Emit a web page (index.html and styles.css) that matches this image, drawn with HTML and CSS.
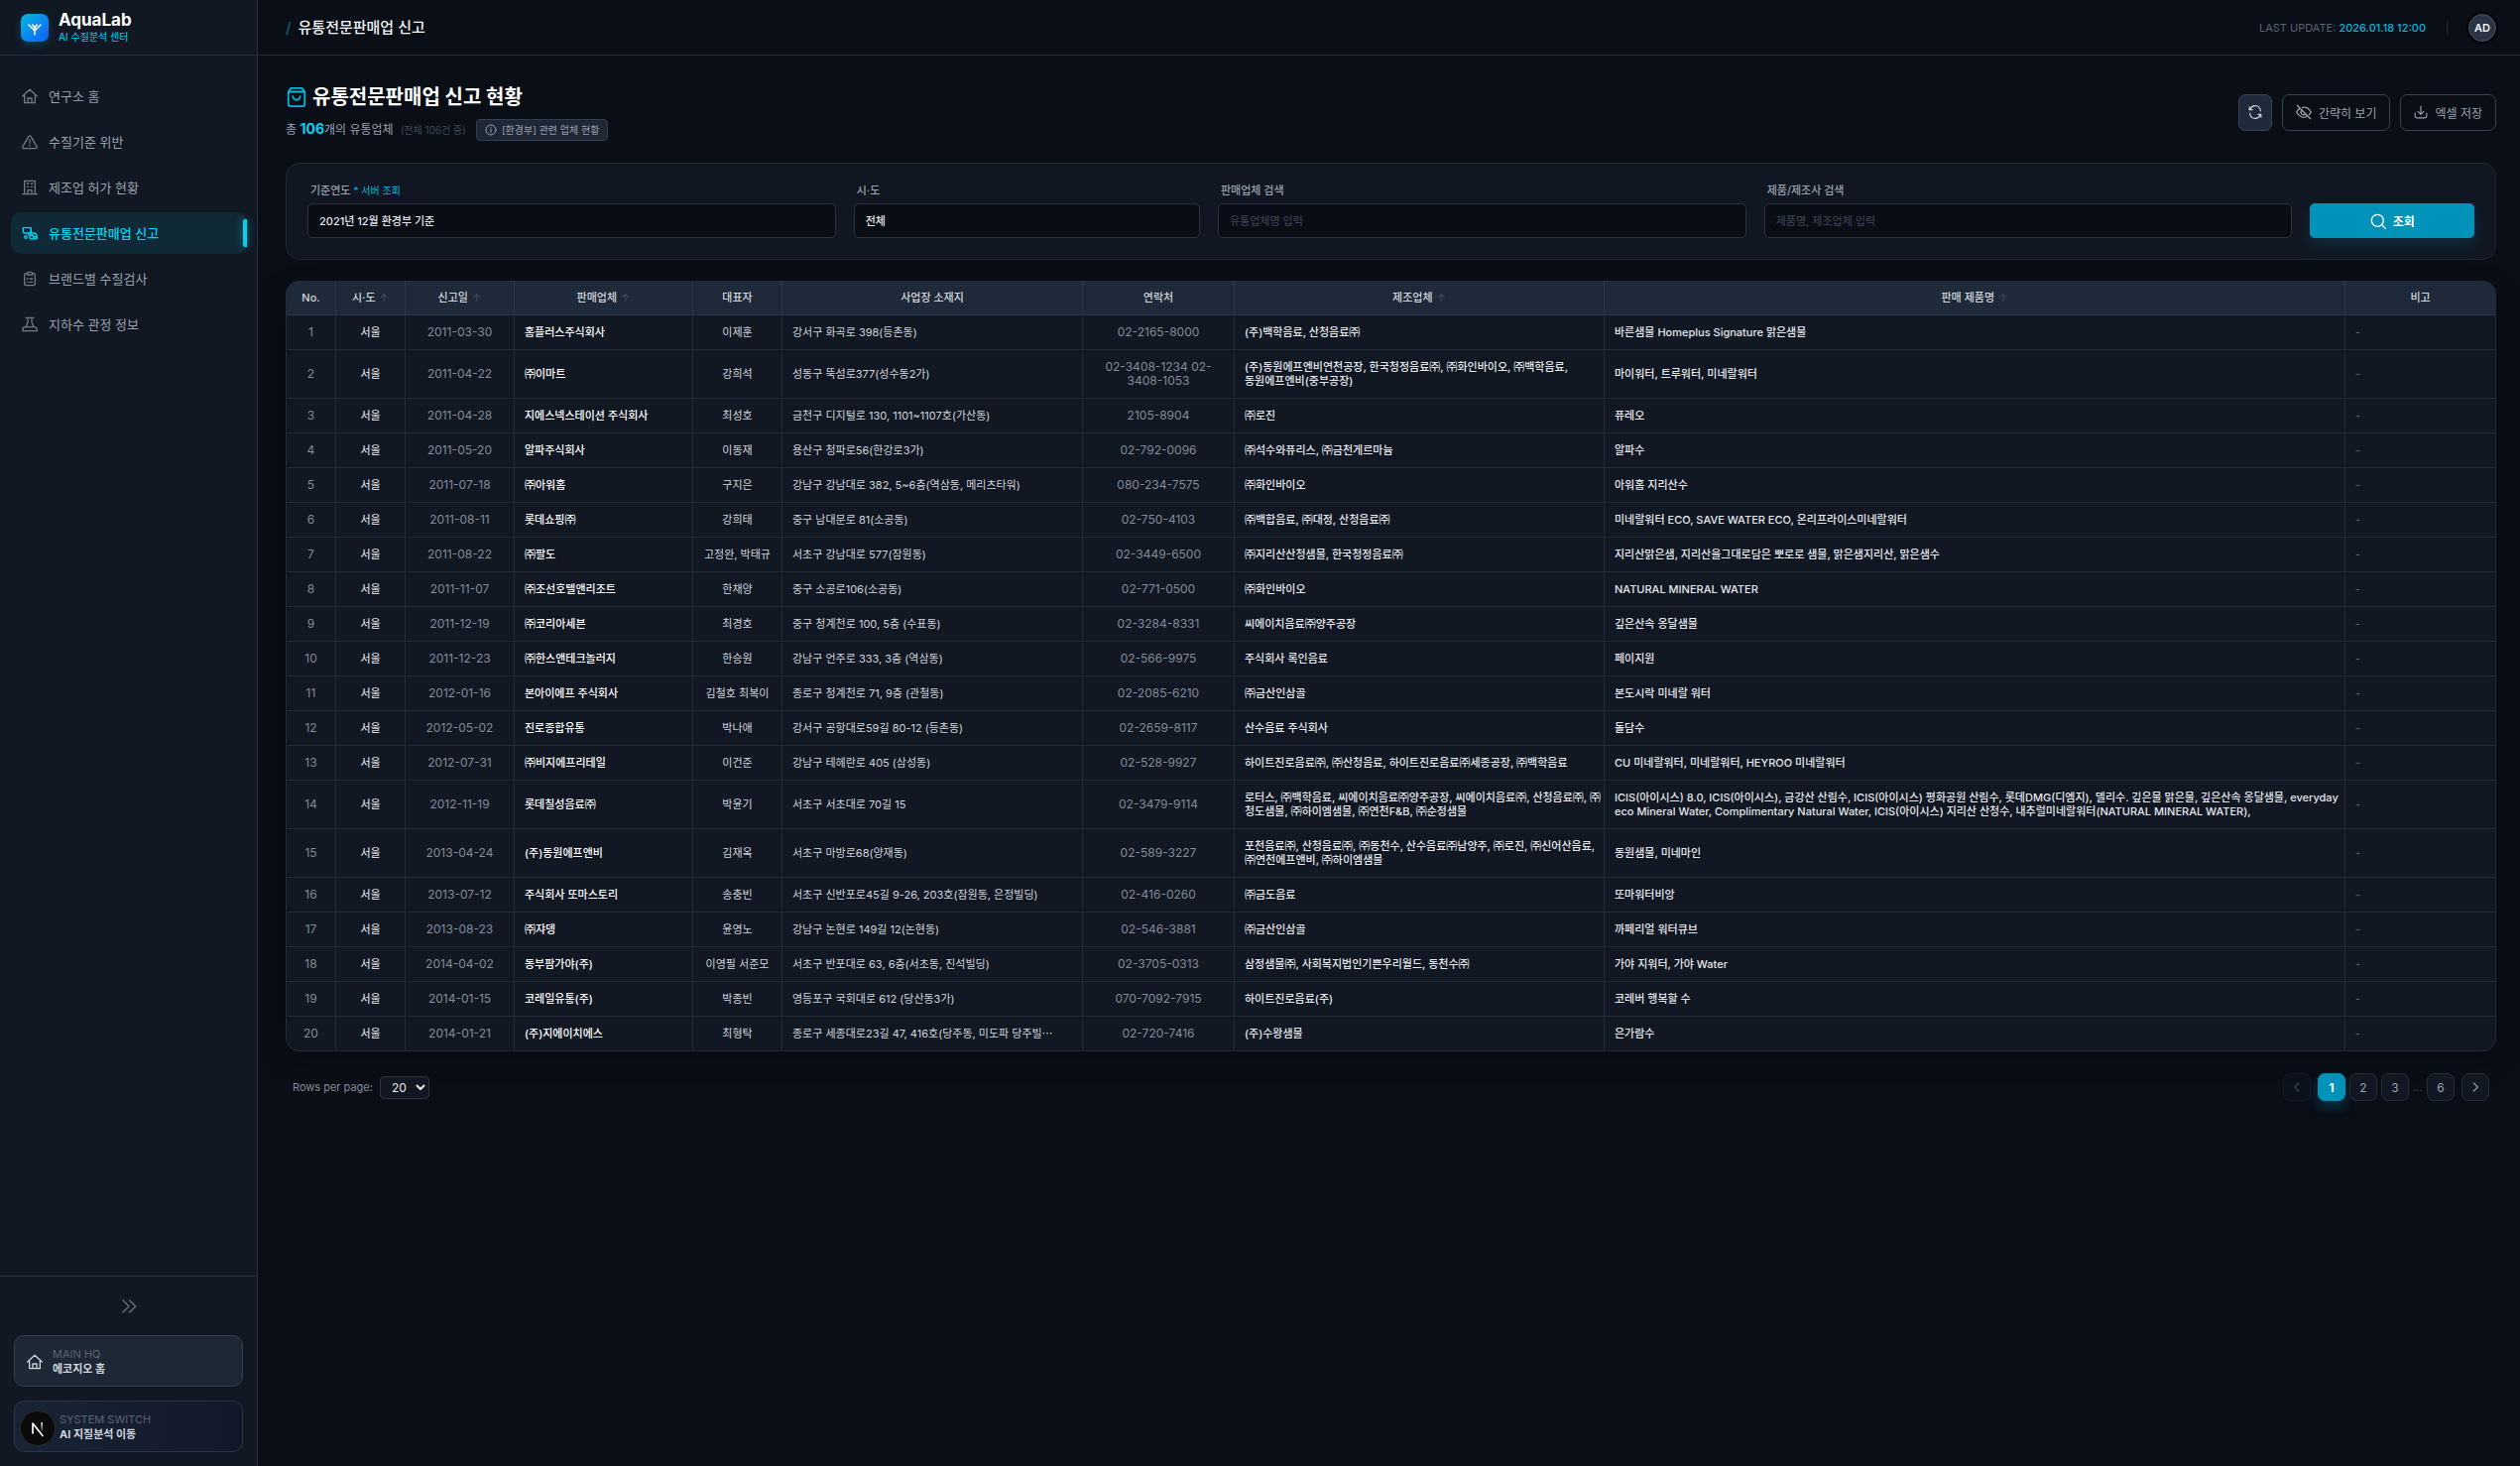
FILE: index.html
```html
<!DOCTYPE html>
<html lang="ko">
<head>
  <meta charset="UTF-8">
  <meta name="viewport" content="width=device-width, initial-scale=1.0">
  <title>AquaLab - 유통전문판매업 신고</title>
  <link rel="stylesheet" href="styles.css">
</head>
<body>
  <aside class="sidebar">
    <div class="brand">
      <span class="brand-logo">
        <svg viewBox="0 0 24 24" width="18" height="18"><path d="M12 21V11M12 16 4 8M12 16l8-8M12 12l-3-4M12 12l3-4"/></svg>
      </span>
      <div>
        <strong class="brand-name">AquaLab</strong>
        <span class="brand-sub">AI 수질분석 센터</span>
      </div>
    </div>

    <nav class="menu">
      <a href="#"><svg viewBox="0 0 24 24"><path d="M1 12 12 2l11 10M4 10v12h16V10M9 22v-7h6v7"/></svg>연구소 홈</a>
      <a href="#"><svg viewBox="0 0 24 24"><path d="M10.5 3.5 1.5 19A2 2 0 0 0 3 22h18a2 2 0 0 0 1.5-3l-9-15.5a2 2 0 0 0-3 0zM12 9v5M12 17v1"/></svg>수질기준 위반</a>
      <a href="#"><svg viewBox="0 0 24 24"><path d="M1 22h22M4 22V2h16v20M9 22v-6h6v6M8 6h2M14 6h2M8 11h2M14 11h2"/></svg>제조업 허가 현황</a>
      <a href="#" class="active"><svg viewBox="0 0 24 24"><path d="M2 4h12v8H5a3 3 0 0 1-3-3zM14 5l-1 7 4 4M16 12h4l3 4v4M9 13l4 3"/><circle cx="6" cy="18" r="2"/><circle cx="15" cy="18" r="3"/><circle cx="20" cy="19" r="2"/></svg>유통전문판매업 신고</a>
      <a href="#"><svg viewBox="0 0 24 24"><path d="M8 4H6a2 2 0 0 0-2 2v14a2 2 0 0 0 2 2h12a2 2 0 0 0 2-2V6a2 2 0 0 0-2-2h-2M8 6h8V4a2 2 0 0 0-2-2h-4a2 2 0 0 0-2 2zM8 12h1M12 12h4M8 17h1M12 17h4"/></svg>브랜드별 수질검사</a>
      <a href="#"><svg viewBox="0 0 24 24"><path d="M6 2h12M9 2v7l-3 7M15 2v7l3 7M5 16h14c3 0 4 2 4 5v1H1v-1c0-3 1-5 4-5z"/></svg>지하수 관정 정보</a>
    </nav>

    <div class="sidebar-foot">
      <button class="collapse" aria-label="메뉴 펼치기"><svg viewBox="0 0 24 24" width="16" height="16"><path d="m3 3 9 9-9 9M13 3l9 9-9 9"/></svg></button>
      <a href="#" class="switch">
        <svg viewBox="0 0 24 24" width="16" height="16"><path d="M1 12 12 2l11 10M4 10v12h16V10M9 22v-7h6v7"/></svg>
        <span><small>MAIN HQ</small><b>에코지오 홈</b></span>
      </a>
      <a href="#" class="switch system">
        <span><small>SYSTEM SWITCH</small><b>AI 지질분석 이동</b></span>
      </a>
    </div>
    <button class="dev-badge" aria-label="개발 도구">
      <svg viewBox="0 0 24 24" width="20" height="20">
        <defs><linearGradient id="fade" x1="0" y1="0" x2="0" y2="1"><stop offset="0" stop-color="#fff"/><stop offset="1" stop-color="#fff" stop-opacity="0"/></linearGradient></defs>
        <path d="M6 18V6l12 15"/><rect x="16" y="5" width="2" height="12" fill="url(#fade)" stroke="none"/>
      </svg>
    </button>
  </aside>

  <div class="page">
    <header class="topbar">
      <div class="crumb"><span>/</span>유통전문판매업 신고</div>
      <div class="topbar-right">
        <span class="updated">LAST UPDATE: <em>2026.01.18 12:00</em></span>
        <i class="divider"></i>
        <span class="avatar">AD</span>
      </div>
    </header>

    <main>
      <section class="heading">
        <div>
          <h1><svg viewBox="0 0 24 24" width="22" height="22"><path d="M6 2h12l3 4v14a2 2 0 0 1-2 2H5a2 2 0 0 1-2-2V6zM3 6h18M8 11a4 4 0 0 0 8 0"/></svg>유통전문판매업 신고 현황</h1>
          <p class="summary">
            <span>총 <b>106</b>개의 유통업체</span>
            <span class="total">(전체 106건 중)</span>
            <span class="chip"><svg viewBox="0 0 24 24" width="12" height="12"><circle cx="12" cy="12" r="10"/><path d="M12 11v6M12 7v1"/></svg>[환경부] 관련 업체 현황</span>
          </p>
        </div>
        <div class="actions">
          <button class="btn icon-btn" aria-label="새로고침"><svg viewBox="0 0 24 24" width="14" height="14"><path d="M21 10A9 9 0 0 0 4 6L2 8M2 3v5h5M3 14a9 9 0 0 0 17 4l2-2M22 21v-5h-5"/></svg></button>
          <button class="btn"><svg viewBox="0 0 24 24" width="16" height="16"><path d="M2 2l20 20M6 6C4 8 2 10 1 12c3 5 7 8 11 8 2 0 4-1 6-2M10 5c5-1 10 2 13 7a14 14 0 0 1-3 4M9 9a4 4 0 0 0 6 6"/></svg>간략히 보기</button>
          <button class="btn"><svg viewBox="0 0 24 24" width="14" height="14"><path d="M12 2v14M7 11l5 5 5-5M2 14v5a3 3 0 0 0 3 3h14a3 3 0 0 0 3-3v-5"/></svg>엑셀 저장</button>
        </div>
      </section>

      <form class="filters">
        <div class="field wide">
          <label for="year">기준연도 <span>* 서버 조회</span></label>
          <select id="year"><option>2021년 12월 환경부 기준</option></select>
        </div>
        <div class="field">
          <label for="region">시·도</label>
          <select id="region"><option>전체</option></select>
        </div>
        <div class="field wide">
          <label for="seller">판매업체 검색</label>
          <input id="seller" type="text" placeholder="유통업체명 입력">
        </div>
        <div class="field wide">
          <label for="product">제품/제조사 검색</label>
          <input id="product" type="text" placeholder="제품명, 제조업체 입력">
        </div>
        <button type="button" class="search"><svg viewBox="0 0 24 24" width="16" height="16"><circle cx="11" cy="11" r="9"/><path d="m18 18 5 5"/></svg>조회</button>
      </form>

      <div class="table-card">
        <table>
          <colgroup>
            <col class="c-no"><col class="c-region"><col class="c-date"><col class="c-seller"><col class="c-ceo">
            <col class="c-addr"><col class="c-tel"><col class="c-maker"><col><col class="c-note">
          </colgroup>
          <thead>
            <tr><th>No.</th><th>시·도<i>↑</i></th><th>신고일<i>↑</i></th><th>판매업체<i>↑</i></th><th>대표자</th><th>사업장 소재지</th><th>연락처</th><th>제조업체<i>↑</i></th><th>판매 제품명<i>↑</i></th><th>비고</th></tr>
          </thead>
          <tbody>
            <tr><td>1</td><td>서울</td><td>2011-03-30</td><td>홈플러스주식회사</td><td>이제훈</td><td>강서구 화곡로 398(등촌동)</td><td>02-2165-8000</td><td>(주)백학음료, 산청음료㈜</td><td>바른샘물 Homeplus Signature 맑은샘물</td><td>-</td></tr>
            <tr><td>2</td><td>서울</td><td>2011-04-22</td><td>㈜이마트</td><td>강희석</td><td>성동구 뚝섬로377(성수동2가)</td><td>02-3408-1234 02-<br>3408-1053</td><td>(주)동원에프엔비연천공장, 한국청정음료㈜, ㈜화인바이오, ㈜백학음료,<br>동원에프엔비(중부공장)</td><td>마이워터, 트루워터, 미네랄워터</td><td>-</td></tr>
            <tr><td>3</td><td>서울</td><td>2011-04-28</td><td>지에스넥스테이션 주식회사</td><td>최성호</td><td>금천구 디지털로 130, 1101~1107호(가산동)</td><td>2105-8904</td><td>㈜로진</td><td>퓨레오</td><td>-</td></tr>
            <tr><td>4</td><td>서울</td><td>2011-05-20</td><td>알파주식회사</td><td>이동재</td><td>용산구 청파로56(한강로3가)</td><td>02-792-0096</td><td>㈜석수와퓨리스, ㈜금천게르마늄</td><td>알파수</td><td>-</td></tr>
            <tr><td>5</td><td>서울</td><td>2011-07-18</td><td>㈜아워홈</td><td>구지은</td><td>강남구 강남대로 382, 5~6층(역삼동, 메리츠타워)</td><td>080-234-7575</td><td>㈜화인바이오</td><td>아워홈 지리산수</td><td>-</td></tr>
            <tr><td>6</td><td>서울</td><td>2011-08-11</td><td>롯데쇼핑㈜</td><td>강희태</td><td>중구 남대문로 81(소공동)</td><td>02-750-4103</td><td>㈜백합음료, ㈜대정, 산청음료㈜</td><td>미네랄워터 ECO, SAVE WATER ECO, 온리프라이스미네랄워터</td><td>-</td></tr>
            <tr><td>7</td><td>서울</td><td>2011-08-22</td><td>㈜팔도</td><td>고정완, 박태규</td><td>서초구 강남대로 577(잠원동)</td><td>02-3449-6500</td><td>㈜지리산산청샘물, 한국청정음료㈜</td><td>지리산맑은샘, 지리산을그대로담은 뽀로로 샘물, 맑은샘지리산, 맑은샘수</td><td>-</td></tr>
            <tr><td>8</td><td>서울</td><td>2011-11-07</td><td>㈜조선호텔앤리조트</td><td>한채양</td><td>중구 소공로106(소공동)</td><td>02-771-0500</td><td>㈜화인바이오</td><td>NATURAL MINERAL WATER</td><td>-</td></tr>
            <tr><td>9</td><td>서울</td><td>2011-12-19</td><td>㈜코리아세븐</td><td>최경호</td><td>중구 청계천로 100, 5층 (수표동)</td><td>02-3284-8331</td><td>씨에이치음료㈜양주공장</td><td>깊은산속 옹달샘물</td><td>-</td></tr>
            <tr><td>10</td><td>서울</td><td>2011-12-23</td><td>㈜한스앤테크놀러지</td><td>한승원</td><td>강남구 언주로 333, 3층 (역삼동)</td><td>02-566-9975</td><td>주식회사 록인음료</td><td>페이지원</td><td>-</td></tr>
            <tr><td>11</td><td>서울</td><td>2012-01-16</td><td>본아이에프 주식회사</td><td>김철호 최복이</td><td>종로구 청계천로 71, 9층 (관철동)</td><td>02-2085-6210</td><td>㈜금산인삼골</td><td>본도시락 미네랄 워터</td><td>-</td></tr>
            <tr><td>12</td><td>서울</td><td>2012-05-02</td><td>진로종합유통</td><td>박나애</td><td>강서구 공항대로59길 80-12 (등촌동)</td><td>02-2659-8117</td><td>산수음료 주식회사</td><td>돌담수</td><td>-</td></tr>
            <tr><td>13</td><td>서울</td><td>2012-07-31</td><td>㈜비지에프리테일</td><td>이건준</td><td>강남구 테헤란로 405 (삼성동)</td><td>02-528-9927</td><td>하이트진로음료㈜, ㈜산청음료, 하이트진로음료㈜세종공장, ㈜백학음료</td><td>CU 미네랄워터, 미네랄워터, HEYROO 미네랄워터</td><td>-</td></tr>
            <tr><td>14</td><td>서울</td><td>2012-11-19</td><td>롯데칠성음료㈜</td><td>박윤기</td><td>서초구 서초대로 70길 15</td><td>02-3479-9114</td><td>로터스, ㈜백학음료, 씨에이치음료㈜양주공장, 씨에이치음료㈜, 산청음료㈜, ㈜<br>청도샘물, ㈜하이엠샘물, ㈜연천F&amp;B, ㈜순정샘물</td><td>ICIS(아이시스) 8.0, ICIS(아이시스), 금강산 산림수, ICIS(아이시스) 평화공원 산림수, 롯데DMG(디엠지), 델리수. 깊은물 맑은물, 깊은산속 옹달샘물, everyday<br>eco Mineral Water, Complimentary Natural Water, ICIS(아이시스) 지리산 산청수, 내추럴미네랄워터(NATURAL MINERAL WATER),</td><td>-</td></tr>
            <tr><td>15</td><td>서울</td><td>2013-04-24</td><td>(주)동원에프앤비</td><td>김재옥</td><td>서초구 마방로68(양재동)</td><td>02-589-3227</td><td>포천음료㈜, 산청음료㈜, ㈜동천수, 산수음료㈜남양주, ㈜로진, ㈜신어산음료,<br>㈜연천에프앤비, ㈜하이엠샘물</td><td>동원샘물, 미네마인</td><td>-</td></tr>
            <tr><td>16</td><td>서울</td><td>2013-07-12</td><td>주식회사 또마스토리</td><td>송충빈</td><td>서초구 신반포로45길 9-26, 203호(잠원동, 은정빌딩)</td><td>02-416-0260</td><td>㈜금도음료</td><td>또마워터비앙</td><td>-</td></tr>
            <tr><td>17</td><td>서울</td><td>2013-08-23</td><td>㈜쟈뎅</td><td>윤영노</td><td>강남구 논현로 149길 12(논현동)</td><td>02-546-3881</td><td>㈜금산인삼골</td><td>까페리얼 워터큐브</td><td>-</td></tr>
            <tr><td>18</td><td>서울</td><td>2014-04-02</td><td>동부팜가야(주)</td><td>이영필 서준모</td><td>서초구 반포대로 63, 6층(서초동, 진석빌딩)</td><td>02-3705-0313</td><td>삼정샘물㈜, 사회복지법인기쁜우리월드, 동천수㈜</td><td>가야 지워터, 가야 Water</td><td>-</td></tr>
            <tr><td>19</td><td>서울</td><td>2014-01-15</td><td>코레일유통(주)</td><td>박종빈</td><td>영등포구 국회대로 612 (당산동3가)</td><td>070-7092-7915</td><td>하이트진로음료(주)</td><td>코레버 행복할 수</td><td>-</td></tr>
            <tr><td>20</td><td>서울</td><td>2014-01-21</td><td>(주)지에이치에스</td><td>최형탁</td><td>종로구 세종대로23길 47, 416호(당주동, 미도파 당주빌⋯</td><td>02-720-7416</td><td>(주)수왕샘물</td><td>은가람수</td><td>-</td></tr>
          </tbody>
        </table>
      </div>

      <footer class="pager">
        <label for="rows">Rows per page:</label>
        <select id="rows"><option>20</option></select>
        <div class="pages">
          <button disabled aria-label="이전"><svg viewBox="0 0 24 24" width="14" height="14"><path d="m15 5-7 7 7 7"/></svg></button>
          <div class="numbers">
            <button class="current">1</button>
            <button>2</button>
            <button>3</button>
            <span>...</span>
            <button>6</button>
          </div>
          <button aria-label="다음"><svg viewBox="0 0 24 24" width="14" height="14"><path d="m9 5 7 7-7 7"/></svg></button>
        </div>
      </footer>
    </main>
  </div>
</body>
</html>
```
FILE: styles.css
```css
* {
  box-sizing: border-box;
  margin: 0;
  padding: 0;
}

body {
  display: flex;
  min-height: 100vh;
  font-family: Inter, "Noto Sans CJK KR", sans-serif;
  font-size: 13px;
  background-color: #090e17;
  color: #d1d5dc;
}

a {
  color: inherit;
  text-decoration: none;
}

button,
input,
select {
  font: inherit;
  color: inherit;
}

button {
  cursor: pointer;
}

svg {
  flex: none;
  fill: none;
  stroke: currentColor;
  stroke-width: 2;
  stroke-linecap: round;
  stroke-linejoin: round;
}

/* sidebar */
.sidebar {
  position: relative;
  display: flex;
  flex-direction: column;
  flex: none;
  width: 260px;
  background-color: #111824;
  border-right: 1px solid #27303d;
}

.brand {
  display: flex;
  align-items: center;
  gap: 10px;
  height: 56px;
  padding: 0 21px;
  border-bottom: 1px solid #27303d;
}

.brand-logo {
  display: grid;
  place-items: center;
  width: 28px;
  height: 28px;
  border-radius: 7px;
  color: #fff;
  background: linear-gradient(135deg, #00b8db, #155dfc);
  box-shadow: 0 3px 8px rgba(0, 146, 184, 0.3);
}

.brand-name {
  display: block;
  font-size: 17px;
  line-height: 20px;
  color: #fff;
}

.brand-sub {
  display: block;
  font-size: 10px;
  line-height: 15px;
  font-weight: 500;
  color: #00b8db;
}

.menu {
  display: flex;
  flex-direction: column;
  gap: 4px;
  padding: 20px 10px 20px 11px;
}

.menu a {
  display: flex;
  align-items: center;
  gap: 11px;
  height: 42px;
  padding-bottom: 1px;
  padding-left: 11px;
  border-radius: 10px;
  color: #99a1af;
}

.menu svg {
  width: 16px;
  height: 16px;
  opacity: 0.7;
}

.menu .active {
  color: #00d3f2;
  font-weight: 500;
  background-color: #102936;
}

.menu .active svg {
  opacity: 1;
}

.menu .active::after {
  content: "";
  width: 4px;
  height: 28px;
  margin-left: auto;
  border-radius: 2px 0 0 2px;
  background-color: #00d3f2;
  box-shadow: 0 0 8px rgba(0, 211, 242, 0.5);
}

.sidebar-foot {
  display: flex;
  flex-direction: column;
  gap: 14px;
  margin-top: auto;
  padding: 14px;
  border-top: 1px solid #27303d;
}

.collapse {
  display: grid;
  place-items: center;
  height: 31px;
  border: 0;
  background: none;
  color: #6a7282;
}

.switch {
  display: flex;
  align-items: center;
  gap: 10px;
  height: 52px;
  padding: 2px 12px 0;
  border: 1px solid #343e4c;
  border-radius: 10px;
  background-color: #1e2735;
}

.switch small,
.switch b {
  display: block;
  font-size: 11px;
  line-height: 15px;
}

.switch small {
  color: #5b6473;
}

.switch.system {
  padding-left: 45px;
  border-color: #2a3444;
  background: linear-gradient(90deg, #182434, #12182a);
}

.dev-badge {
  position: absolute;
  left: 20px;
  bottom: 20px;
  display: grid;
  place-items: center;
  width: 36px;
  height: 36px;
  border: 1px solid #2b2b2b;
  border-radius: 50%;
  background-color: #0a0a0a;
  color: #fff;
}

/* top bar */
.page {
  flex: 1;
  min-width: 0;
}

.topbar {
  display: flex;
  align-items: center;
  justify-content: space-between;
  height: 56px;
  padding: 0 24px 0 28px;
  border-bottom: 1px solid #232b37;
}

.crumb {
  font-size: 15px;
  line-height: 20px;
  font-weight: 500;
  color: #f3f4f6;
}

.crumb span {
  margin-right: 7px;
  color: #155e6f;
}

.topbar-right {
  display: flex;
  align-items: center;
  gap: 21px;
}

.updated {
  font-size: 11px;
  color: #5b6473;
}

.updated em {
  font-style: normal;
  font-weight: 500;
  color: #00b8db;
}

.divider {
  width: 1px;
  height: 14px;
  background-color: #232b37;
}

.avatar {
  display: grid;
  place-items: center;
  width: 28px;
  height: 28px;
  border: 1px solid #4a5565;
  border-radius: 50%;
  background-color: #2a3444;
  box-shadow: 0 0 0 2px #000;
  font-size: 11px;
  font-weight: 600;
  color: #f3f4f6;
}

main {
  padding: 28px 24px 28px 28px;
}

/* heading */
.heading {
  display: flex;
  align-items: center;
  justify-content: space-between;
  margin-bottom: 22px;
}

h1 {
  display: flex;
  align-items: center;
  gap: 5px;
  margin-bottom: 7px;
  font-size: 20px;
  line-height: 28px;
  color: #fff;
}

h1 svg {
  color: #00b8db;
}

.summary {
  display: flex;
  align-items: center;
  gap: 7px;
  font-size: 12px;
  line-height: 22px;
  color: #99a1af;
}

.summary b {
  font-size: 14px;
  color: #00d3f2;
}

.total {
  font-size: 10px;
  color: #414b5a;
}

.chip {
  display: flex;
  align-items: center;
  gap: 5px;
  height: 22px;
  margin-left: 3px;
  padding: 0 8px;
  border: 1px solid #343e4c;
  border-radius: 4px;
  background-color: #1e2735;
  font-size: 10px;
}

.actions {
  display: flex;
  gap: 10px;
}

.btn {
  display: flex;
  align-items: center;
  gap: 7px;
  height: 37px;
  padding: 0 13px;
  border: 1px solid #364153;
  border-radius: 7px;
  background: none;
  font-size: 12px;
  color: #99a1af;
}

.icon-btn {
  padding: 0 9px;
  background-color: #1e2939;
  color: #d1d5dc;
}

/* filters */
.filters {
  display: grid;
  grid-template-columns: repeat(12, 1fr);
  gap: 18px;
  align-items: end;
  margin-bottom: 21px;
  padding: 20px 21px 21px;
  border: 1px solid #1e2733;
  border-radius: 14px;
  background-color: #101722;
}

.field {
  grid-column: span 2;
}

.field.wide {
  grid-column: span 3;
}

.field label {
  display: block;
  margin-bottom: 5px;
  padding-left: 3px;
  font-size: 11px;
  line-height: 15px;
  font-weight: 500;
  color: #99a1af;
}

.field label span {
  font-size: 10px;
  font-weight: 400;
  color: #00b8db;
}

.field select,
.field input {
  display: block;
  width: 100%;
  height: 35px;
  padding: 0 11px;
  border: 1px solid #2a323f;
  border-radius: 5px;
  appearance: none;
  background-color: #090d16;
  font-size: 11px;
  font-weight: 500;
  color: #e5e7eb;
}

.field input::placeholder {
  color: #3f4856;
  font-weight: 400;
}

.search {
  display: flex;
  align-items: center;
  justify-content: center;
  gap: 7px;
  height: 35px;
  border: 0;
  border-radius: 5px;
  background-color: #0092b8;
  box-shadow: 0 8px 14px rgba(0, 146, 184, 0.15);
  font-size: 12px;
  font-weight: 700;
  color: #fff;
}

/* table */
.table-card {
  overflow: hidden;
  border: 1px solid #232c39;
  border-top: 0;
  border-radius: 14px;
  background-color: #111824;
  box-shadow: 0 8px 24px rgba(0, 0, 0, 0.25);
}

table {
  width: 100%;
  table-layout: fixed;
  border-collapse: separate;
  border-spacing: 0;
}

.c-no { width: 50px; }
.c-region { width: 70px; }
.c-date { width: 110px; }
.c-seller { width: 180px; }
.c-ceo { width: 90px; }
.c-addr { width: 303px; }
.c-tel { width: 153px; }
.c-maker { width: 373px; }
.c-note { width: 151px; }

th,
td {
  padding: 10px;
  border-right: 1px solid #212a36;
  border-bottom: 1px solid #212a36;
  font-size: 11px;
  line-height: 14px;
  text-align: center;
  white-space: nowrap;
}

th {
  border-color: #2c3847;
  background-color: #1e2939;
  font-weight: 500;
}

th i {
  margin-left: 4px;
  font-style: normal;
  color: #3f4a5a;
}

th:last-child,
td:last-child {
  border-right: 0;
}

tbody tr:last-child td {
  border-bottom: 0;
}

td:nth-child(1),
td:nth-child(3),
td:nth-child(7) {
  font-size: 12px;
  color: #838b98;
}

td:nth-child(2) {
  font-weight: 500;
}

td:nth-child(4),
td:nth-child(6),
td:nth-child(8),
td:nth-child(9),
td:nth-child(10) {
  text-align: left;
}

td:nth-child(4) {
  font-weight: 500;
  color: #fff;
}

td:nth-child(8),
td:nth-child(9) {
  font-weight: 500;
  color: #e5e7eb;
}

td:nth-child(10) {
  color: #5b6473;
}

/* pager */
.pager {
  display: flex;
  align-items: center;
  gap: 7px;
  padding: 22px 7px 0;
  font-size: 12px;
  color: #838b98;
}

.pager label {
  font-size: 11px;
}

.pager select {
  width: 50px;
  height: 23px;
  padding: 0 2px 0 7px;
  border: 1px solid #2a3444;
  border-radius: 4px;
  background-color: #111824;
  color: #e5e7eb;
}

.pages,
.numbers {
  display: flex;
  align-items: center;
  gap: 7px;
}

.pages {
  margin-left: auto;
}

.numbers {
  gap: 4px;
}

.numbers span {
  width: 10px;
  font-size: 10px;
  text-align: center;
  color: #4a5565;
}

.pages button {
  display: grid;
  place-items: center;
  width: 28px;
  height: 28px;
  border: 1px solid #242d3a;
  border-radius: 7px;
  background-color: #111824;
  color: #99a1af;
}

.pages button:disabled {
  opacity: 0.4;
}

.pages .current {
  border-color: #0092b8;
  background-color: #0092b8;
  box-shadow: 0 6px 12px rgba(0, 146, 184, 0.3);
  font-weight: 700;
  color: #fff;
}
```
